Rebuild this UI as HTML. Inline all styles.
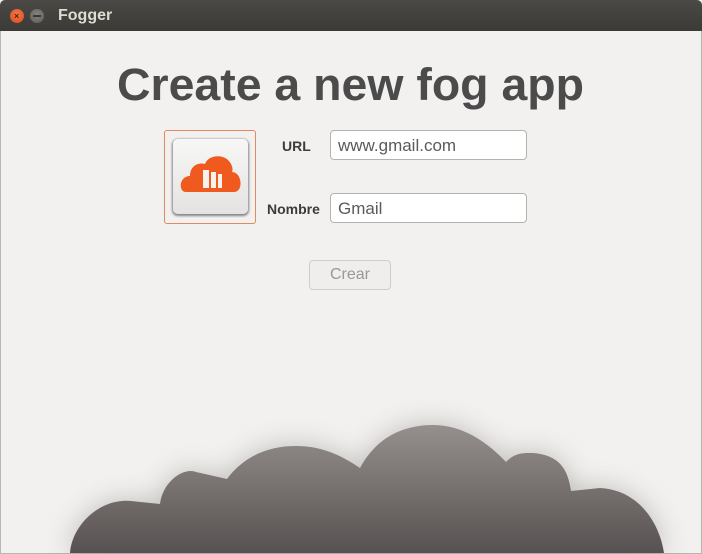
<!DOCTYPE html>
<html><head><style>
body{margin:0;width:702px;height:554px;overflow:hidden;background:#f2f1f0;font-family:"Liberation Sans",sans-serif;position:relative}
.tb{position:absolute;left:0;top:0;width:702px;height:31px;background:linear-gradient(#4a4945,#3b3a36);border-radius:5px 5px 0 0}
.win{position:absolute;left:0;top:31px;width:700px;height:522px;border:1px solid #b8b6b3;border-top:none;}
.lbl{position:absolute;font-weight:bold;font-size:14px;color:#3c3c3c}
.inp{position:absolute;left:330px;width:197px;height:30px;border:1px solid #b6b3ae;border-radius:4px;background:#fff;box-sizing:border-box;font-size:17px;color:#5a5a5a;padding:5px 0 0 7px}
</style></head><body>
<div class="tb"></div>
<div style="position:absolute;left:10px;top:9px;width:14px;height:14px;border-radius:50%;background:radial-gradient(circle at 50% 40%,#f47a4a,#d9481a);"></div>
<div style="position:absolute;left:14px;top:11px;font-size:9px;color:#5a1f0a;font-weight:bold">×</div>
<div style="position:absolute;left:30px;top:9px;width:14px;height:14px;border-radius:50%;background:radial-gradient(circle at 50% 40%,#858480,#5d5c58);"></div>
<div style="position:absolute;left:33px;top:15px;width:8px;height:2px;background:#3a3936"></div>
<div style="position:absolute;left:58px;top:7px;font-size:16px;font-weight:bold;color:#dfdbd2">Fogger</div>
<div class="win"></div>
<svg style="position:absolute;left:0;top:0" width="702" height="554">
<defs>
<linearGradient id="g" x1="0" y1="0" x2="0" y2="1"><stop offset="0" stop-color="#958f8d"/><stop offset="1" stop-color="#575251"/></linearGradient>
<filter id="b" x="-20%" y="-50%" width="140%" height="200%"><feGaussianBlur stdDeviation="14"/></filter>
</defs>
<text x="117" y="100" font-family="Liberation Sans" font-weight="bold" font-size="45" fill="#4b4b4b" textLength="467" lengthAdjust="spacingAndGlyphs">Create a new fog app</text>
<path d="M70 553 C72 525 100 498 131 501 L160 504 C163 480 185 467 196 472 L227 479 C245 455 270 446 296 446 C325 446 345 458 360 468 C375 440 400 425 433 425 C465 425 490 445 506 462 C515 452 525 453 533 453 C560 455 568 470 571 491 L600 488 C640 490 660 525 664 553 Z" fill="#8a8583" opacity="0.5" filter="url(#b)"/>
<path d="M70 553 C72 525 100 498 131 501 L160 504 C163 480 185 467 196 472 L227 479 C245 455 270 446 296 446 C325 446 345 458 360 468 C375 440 400 425 433 425 C465 425 490 445 506 462 C515 452 525 453 533 453 C560 455 568 470 571 491 L600 488 C640 490 660 525 664 553 Z" fill="url(#g)"/>
</svg>
<div style="position:absolute;left:164px;top:130px;width:90px;height:92px;border:1px solid #e08a62;border-radius:3px"></div>
<div style="position:absolute;left:173px;top:139px;width:75px;height:75px;border-radius:5px;background:linear-gradient(#f7f7f6,#e4e3e1);box-shadow:0 1px 2px 1px rgba(0,0,0,.45)"></div>
<svg style="position:absolute;left:0;top:0" width="702" height="554">
<path d="M186 192 C178 192 179 176 190 176 C190 166 198 162 205 164 C208 155 222 154 228 160 C233 165 233 170 232 172 C242 172 244 192 234 192 Z" fill="#ef5a1f"/>
<rect x="203" y="170" width="6" height="18" fill="#f7f2ee"/>
<rect x="211" y="172" width="5" height="16" fill="#f7f2ee"/>
<rect x="218" y="174" width="4" height="14" fill="#f7f2ee"/>
</svg>
<div class="lbl" style="left:282px;top:138px">URL</div>
<div class="inp" style="top:130px">www.gmail.com</div>
<div class="lbl" style="left:267px;top:201px">Nombre</div>
<div class="inp" style="top:193px">Gmail</div>
<div style="position:absolute;left:309px;top:260px;width:82px;height:30px;border:1px solid #cfcdca;border-radius:4px;box-sizing:border-box;background:#efeeed;color:#9a9896;font-size:16px;text-align:center;line-height:28px">Crear</div>
</body></html>
